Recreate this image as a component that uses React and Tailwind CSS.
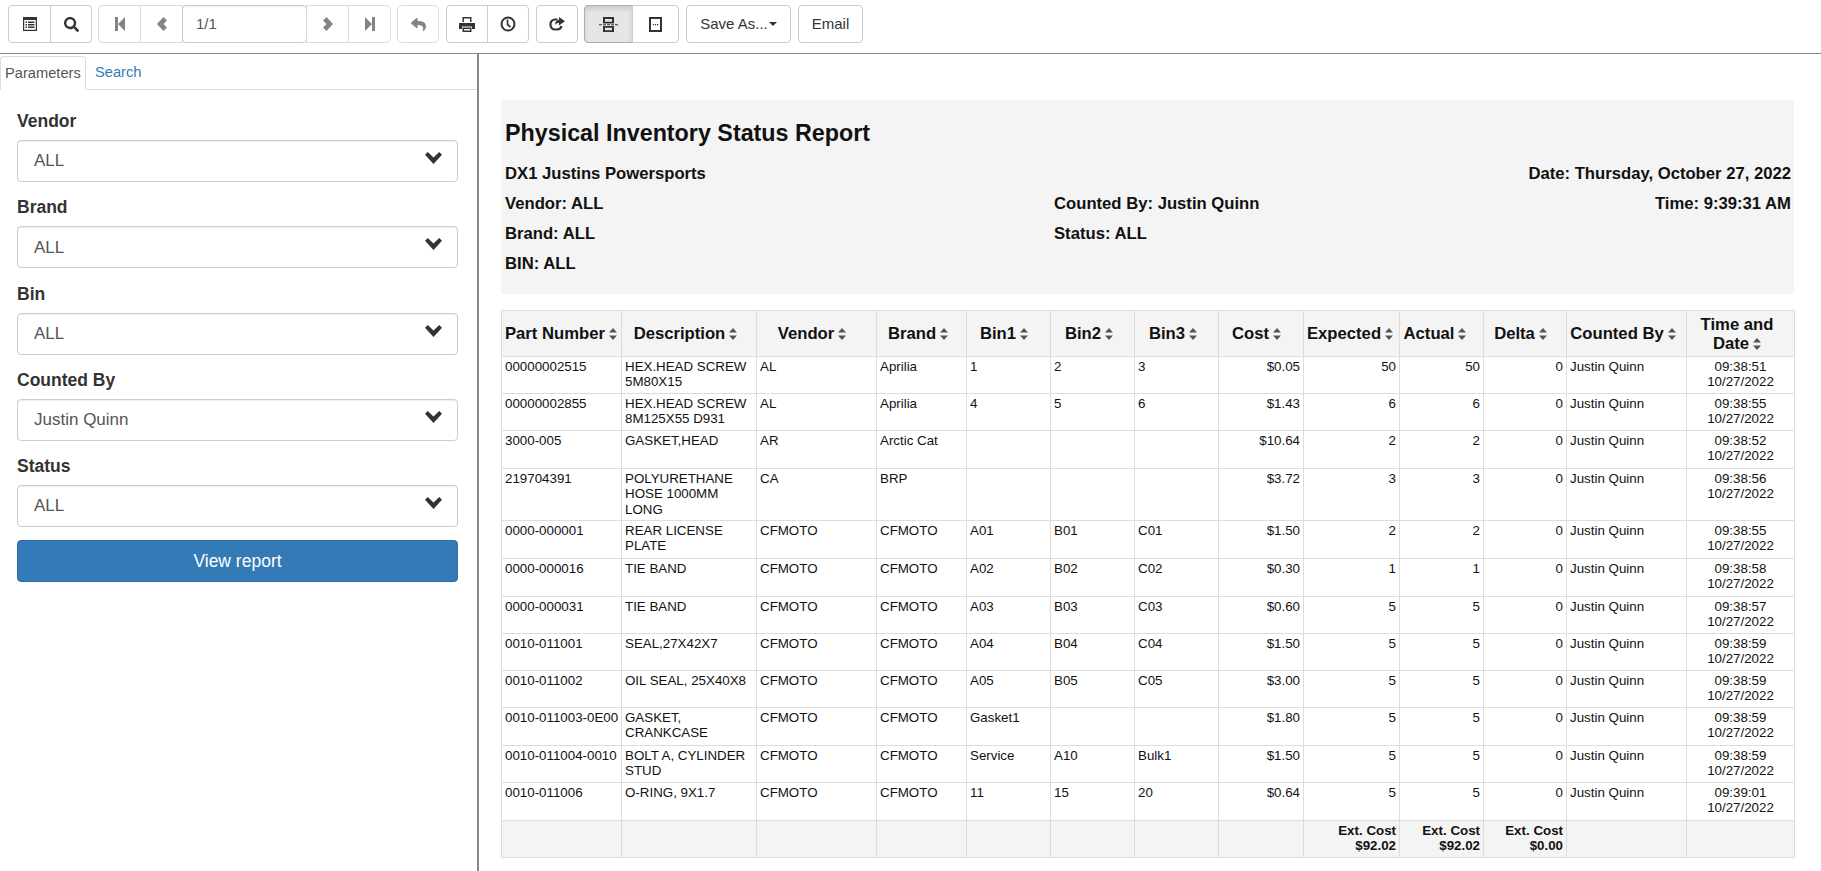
import React from "react";
import { FaReply, FaSearch } from "react-icons/fa";

const Svg = ({ w, h, children, cls = "" }) => (
  <svg width={w} height={h} viewBox={`0 0 ${w} ${h}`} fill="#333" className={cls}>{children}</svg>
);
const ListIcon = () => (
  <Svg w={14} h={14}>
    <path fillRule="evenodd" d="M0 0h14v14H0zM1.200 3v9.800h11.600V3z" />
    <path d="M2.500 4.500h1.500V6H2.500zM5 4.500h6.500V6H5zM2.500 7h1.500v1.500H2.500zM5 7h6.500v1.500H5zM2.500 9.500h1.500V11H2.500zM5 9.500h6.500V11H5z" />
  </Svg>
);
const StepBack = () => <Svg w={10} h={14}><path d="M0 0h3v14H0zM10 0v14L3 7z" /></Svg>;
const StepFwd = () => <Svg w={10} h={14}><path d="M7 0h3v14H7zM0 0v14l7-7z" /></Svg>;
const ChevL = () => <Svg w={10} h={14}><path d="M6.500 0 10 3.500 6.500 7l3.500 3.500L6.500 14 0 7z" /></Svg>;
const ChevR = () => <Svg w={10} h={14}><path d="M3.500 0 0 3.500 3.500 7 0 10.500 3.500 14 10 7z" /></Svg>;
const PrintIcon = () => (
  <Svg w={16} h={15}>
    <path d="M0 6h16v6h-3V9.500H3V12H0z" />
    <path d="M3.500 0h9v5H11V1.500H5V5H3.500z" />
    <path fillRule="evenodd" d="M3.500 10.500h9V15h-9zM5 12v1.500h6V12z" />
  </Svg>
);
const ClockIcon = () => (
  <svg width="16" height="16" viewBox="0 0 16 16" fill="none" stroke="#333" strokeWidth="2">
    <circle cx="8" cy="8" r="6.500" />
    <path d="M7.500 3.500V8.500l3 2.500" strokeWidth="1.700" />
  </svg>
);
const ShareIcon = () => (
  <svg width="16" height="15" viewBox="0 0 16 15" fill="none">
    <path d="M8.500 2.500H6A4.500 4.500 0 0 0 1.500 7v1A4.500 4.500 0 0 0 6 12.500h2A4.500 4.500 0 0 0 12.500 9" stroke="#333" strokeWidth="2.200" />
    <path d="M10 0l6 4.200L10 8.500V6C8 6 7 6.600 6 8c0-3 1.500-4.800 4-5.200z" fill="#333" />
  </svg>
);
const PageBreak = () => (
  <Svg w={19} h={15}>
    <path fillRule="evenodd" d="M4 0h11v6.500H4zM6 2v2.700h7V2zM4 9h11v6H4zM6 10.700v2.500h7v-2.500z" />
    <path d="M0 7.200h3v1H0zM4 7.200h3v1H4zM8 7.200h3v1H8zM12 7.200h3v1h-3zM16 7.200h3v1h-3z" />
  </Svg>
);
const SinglePage = () => (
  <Svg w={13} h={15}>
    <path fillRule="evenodd" d="M0 0h13v15H0zM2 2v11h9V2z" />
    <path d="M3.800 7h1.200v1.200H3.800zM5.900 7h1.200v1.200H5.900zM8 7h1.200v1.200H8z" />
  </Svg>
);
const SelectChevron = () => <Svg w={17} h={12} cls="-mt-[6px]"><path d="M2.800 0 8.500 5.500 14.200 0 17 2.800 8.500 12 0 2.800z" /></Svg>;

const Btn = ({ children, cls = "", off }) => (
  <button className={`h-[38px] flex items-center justify-center border -ml-px first:ml-0 first:rounded-l last:rounded-r bg-white text-[#333] ${off ? "border-[#dcdcdc]" : "border-[#cccccc]"} ${cls}`}>
    <span className={`flex items-center ${off ? "opacity-60" : ""}`}>{children}</span>
  </button>
);
const Group = ({ children, cls = "" }) => <div className={`flex ${cls}`}>{children}</div>;

const Select = ({ label, value }) => (
  <div>
    <div className="text-[17.5px] font-bold text-[#333] leading-[24px] mb-[7px] mt-[1px]">{label}</div>
    <div className="h-[42px] rounded border border-[#cccccc] shadow-[inset_0_1px_1px_rgba(0,0,0,0.075)] flex items-center justify-between pl-[16px] pr-[15px] text-[17px] text-[#555]">
      <span>{value}</span>
      <SelectChevron />
    </div>
  </div>
);

const cols = [
  ["Part Number", "w-[120px]", "text-left", "text-left whitespace-nowrap"],
  ["Description", "w-[135px]", "text-left", "text-center whitespace-nowrap pr-[10px]"],
  ["Vendor", "w-[120px]", "text-left", "text-center whitespace-nowrap pr-[12px]"],
  ["Brand", "w-[90px]", "text-left", "text-center whitespace-nowrap pr-[10px]"],
  ["Bin1", "w-[84px]", "text-left", "text-center whitespace-nowrap pr-[12px]"],
  ["Bin2", "w-[84px]", "text-left", "text-center whitespace-nowrap pr-[10px]"],
  ["Bin3", "w-[84px]", "text-left", "text-center whitespace-nowrap pr-[10px]"],
  ["Cost", "w-[85px]", "text-right", "text-center whitespace-nowrap pr-[12px]"],
  ["Expected", "w-[96px]", "text-right", "text-center whitespace-nowrap pr-[10px]"],
  ["Actual", "w-[84px]", "text-right", "text-center whitespace-nowrap pr-[16px]"],
  ["Delta", "w-[83px]", "text-right", "text-center whitespace-nowrap pr-[12px]"],
  ["Counted By", "w-[120px]", "text-left", "text-center whitespace-nowrap pr-[10px]"],
  ["Time and Date", "w-[108px]", "text-center", "text-center pr-[10px]"],
];

const rows = [
  ["00000002515", "HEX.HEAD SCREW 5M80X15", "AL", "Aprilia", "1", "2", "3", "$0.05", "50", "50", "0", "Justin Quinn", "09:38:51", "h-[37px]"],
  ["00000002855", "HEX.HEAD SCREW 8M125X55 D931", "AL", "Aprilia", "4", "5", "6", "$1.43", "6", "6", "0", "Justin Quinn", "09:38:55", "h-[37px]"],
  ["3000-005", "GASKET,HEAD", "AR", "Arctic Cat", "", "", "", "$10.64", "2", "2", "0", "Justin Quinn", "09:38:52", "h-[38px]"],
  ["219704391", "POLYURETHANE HOSE 1000MM LONG", "CA", "BRP", "", "", "", "$3.72", "3", "3", "0", "Justin Quinn", "09:38:56", "h-[52px]"],
  ["0000-000001", "REAR LICENSE PLATE", "CFMOTO", "CFMOTO", "A01", "B01", "C01", "$1.50", "2", "2", "0", "Justin Quinn", "09:38:55", "h-[38px]"],
  ["0000-000016", "TIE BAND", "CFMOTO", "CFMOTO", "A02", "B02", "C02", "$0.30", "1", "1", "0", "Justin Quinn", "09:38:58", "h-[38px]"],
  ["0000-000031", "TIE BAND", "CFMOTO", "CFMOTO", "A03", "B03", "C03", "$0.60", "5", "5", "0", "Justin Quinn", "09:38:57", "h-[37px]"],
  ["0010-011001", "SEAL,27X42X7", "CFMOTO", "CFMOTO", "A04", "B04", "C04", "$1.50", "5", "5", "0", "Justin Quinn", "09:38:59", "h-[37px]"],
  ["0010-011002", "OIL SEAL, 25X40X8", "CFMOTO", "CFMOTO", "A05", "B05", "C05", "$3.00", "5", "5", "0", "Justin Quinn", "09:38:59", "h-[37px]"],
  ["0010-011003-0E00", "GASKET, CRANKCASE", "CFMOTO", "CFMOTO", "Gasket1", "", "", "$1.80", "5", "5", "0", "Justin Quinn", "09:38:59", "h-[38px]"],
  ["0010-011004-0010", "BOLT A, CYLINDER STUD", "CFMOTO", "CFMOTO", "Service", "A10", "Bulk1", "$1.50", "5", "5", "0", "Justin Quinn", "09:38:59", "h-[37px]"],
  ["0010-011006", "O-RING, 9X1.7", "CFMOTO", "CFMOTO", "11", "15", "20", "$0.64", "5", "5", "0", "Justin Quinn", "09:39:01", "h-[38px]"],
];

const Sort = () => (
  <svg width="8" height="14" viewBox="0 0 8 14" className="inline-block ml-[4px] align-[-2px]" fill="#555">
    <path d="M4 1 8 5.500H0zM4 13 0 8.500h8z" />
  </svg>
);

const cell = "border border-[#dddddd] px-[3px] pt-[2px] pb-0 align-top";

export default function App() {
  return (
    <div className="w-[1821px] h-[871px] overflow-hidden bg-white flex flex-col text-[#333]" style={{ fontFamily: "Arial, 'Liberation Sans', sans-serif" }}>
      <div className="h-[54px] shrink-0 border-b border-[#888] flex items-start pt-[5px] pl-[8px] gap-[6px]">
        <Group>
          <Btn cls="w-[43px]"><ListIcon /></Btn>
          <Btn cls="w-[42px]"><FaSearch size={15} /></Btn>
        </Group>
        <Group>
          <Btn off cls="w-[43px]"><StepBack /></Btn>
          <Btn off cls="w-[43px]"><ChevL /></Btn>
          <div className="w-[125px] h-[38px] -ml-px rounded border border-[#cccccc] shadow-[inset_0_1px_1px_rgba(0,0,0,0.075)] pl-[13px] text-[15px] text-[#555] flex items-center">1/1</div>
          <Btn off cls="w-[43px]"><ChevR /></Btn>
          <Btn off cls="w-[43px]"><StepFwd /></Btn>
        </Group>
        <Group><Btn off cls="w-[42px]"><FaReply size={15} /></Btn></Group>
        <Group cls="ml-px">
          <Btn cls="w-[42px]"><PrintIcon /></Btn>
          <Btn cls="w-[42px]"><ClockIcon /></Btn>
        </Group>
        <Group cls="ml-px"><Btn cls="w-[42px]"><ShareIcon /></Btn></Group>
        <Group>
          <Btn cls="w-[49px] !bg-[#e6e6e6] !border-[#adadad] shadow-[inset_0_3px_5px_rgba(0,0,0,0.125)]"><PageBreak /></Btn>
          <Btn cls="w-[47px]"><SinglePage /></Btn>
        </Group>
        <Group cls="ml-px">
          <Btn cls="w-[105px] text-[15px]">Save As...<span className="ml-[1px] w-0 h-0 border-x-[4px] border-x-transparent border-t-[4px] border-t-[#333]" /></Btn>
        </Group>
        <Group cls="ml-px"><Btn cls="w-[65px] text-[15px]">Email</Btn></Group>
      </div>

      <div className="flex flex-1 min-h-0">
        <aside className="w-[479px] shrink-0 border-r-2 border-[#888]">
          <div className="h-[36px] pt-[2px] flex border-b border-[#dddddd] text-[14.670px]">
            <div className="h-[34px] w-[86px] border border-[#dddddd] border-b-white rounded-t flex items-center pl-[4px] pb-[1px] text-[#555]">Parameters</div>
            <div className="h-[33px] px-[9px] pb-[1px] flex items-center text-[#337ab7]">Search</div>
          </div>
          <div className="pl-[17px] pr-[19px] pt-[18px] flex flex-col gap-[12.300px]">
            <Select label="Vendor" value="ALL" />
            <Select label="Brand" value="ALL" />
            <Select label="Bin" value="ALL" />
            <Select label="Counted By" value="Justin Quinn" />
            <Select label="Status" value="ALL" />
            <button className="h-[42px] mt-[1px] rounded bg-[#337ab7] border border-[#2e6da4] text-white text-[17.5px]">View report</button>
          </div>
        </aside>

        <main className="flex-1 pl-[22px] pt-[46px] min-w-0">
          <div className="h-[194px] w-[1293px] bg-[#f4f4f4] pl-[4px] pr-[3px] pt-[18px] font-bold text-[#111]">
            <div className="text-[23.300px] leading-[30px] mb-[11px]">Physical Inventory Status Report</div>
            <div className="grid grid-cols-[549px_1fr_auto] text-[16.670px] leading-[30px] auto-rows-[30px]">
              <div>DX1 Justins Powersports</div><div></div><div className="text-right">Date: Thursday, October 27, 2022</div>
              <div>Vendor: ALL</div><div>Counted By: Justin Quinn</div><div className="text-right">Time: 9:39:31 AM</div>
              <div>Brand: ALL</div><div>Status: ALL</div><div></div>
              <div>BIN: ALL</div><div></div><div></div>
            </div>
          </div>
          <table className="mt-[16px] w-[1293px] table-fixed border-collapse text-[13.330px] leading-[15.330px] text-[#111]">
            <colgroup>{cols.map((c) => <col key={c[0]} className={c[1]} />)}</colgroup>
            <thead>
              <tr className="h-[46px] bg-[#f4f4f4]">
                {cols.map((c) => (
                  <th key={c[0]} className={`border border-[#dddddd] pl-[3px] font-bold text-[16.670px] leading-[19px] align-middle ${c[3]}`}>{c[0]}<Sort /></th>
                ))}
              </tr>
            </thead>
            <tbody>
              {rows.map((r) => (
                <tr key={r[0]} className={r[13]}>
                  {cols.slice(0, 12).map((c, i) => (
                    <td key={c[0]} className={`${cell} ${c[2]} ${i === 0 ? "whitespace-nowrap overflow-hidden" : ""}`}>{r[i]}</td>
                  ))}
                  <td className={`${cell} text-center`}>{r[12]}<br />10/27/2022</td>
                </tr>
              ))}
              <tr className="h-[37px] bg-[#f4f4f4]">
                {cols.map((c, i) => (
                  <td key={c[0]} className={`${cell} text-right font-bold`}>
                    {i === 8 || i === 9 ? <>Ext. Cost<br />$92.02</> : i === 10 ? <>Ext. Cost<br />$0.00</> : null}
                  </td>
                ))}
              </tr>
            </tbody>
          </table>
        </main>
      </div>
    </div>
  );
}
